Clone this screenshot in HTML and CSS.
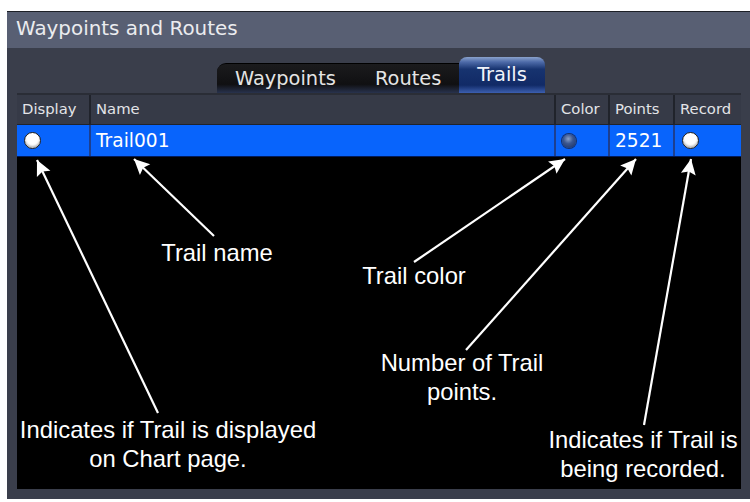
FILE: index.html
```html
<!DOCTYPE html>
<html lang="en">
<head>
    <meta charset="UTF-8">
    <title>Waypoints and Routes - Trails</title>
    <link rel="stylesheet" href="styles.css">
</head>
<body>
    <div class="frame">
        <div class="titlebar">Waypoints and Routes</div>

        <div class="panel">
            <div class="tabs">
                <div class="tab-group">
                    <span class="tab">Waypoints</span>
                    <span class="tab">Routes</span>
                </div>
                <span class="tab active">Trails</span>
            </div>

            <div class="table">
                <div class="row head">
                    <div class="cell">Display</div>
                    <div class="cell">Name</div>
                    <div class="cell">Color</div>
                    <div class="cell">Points</div>
                    <div class="cell">Record</div>
                </div>
                <div class="row selected">
                    <div class="cell"><span class="radio"></span></div>
                    <div class="cell">Trail001</div>
                    <div class="cell"><span class="swatch"></span></div>
                    <div class="cell">2521</div>
                    <div class="cell"><span class="radio"></span></div>
                </div>
                <div class="empty"></div>
            </div>
        </div>
    </div>

    <!-- callouts -->
    <svg class="arrows" width="750" height="502" viewBox="0 0 750 502">
        <defs>
            <marker id="head" markerWidth="8" markerHeight="8" refX="0" refY="4" orient="auto" markerUnits="strokeWidth">
                <path d="M0 4 L7 0.6 L5.8 4 L7 7.4 Z" fill="#fff"/>
            </marker>
        </defs>
        <g stroke="#fff" stroke-width="2.2" marker-start="url(#head)">
            <line x1="37" y1="160" x2="158" y2="413"/>
            <line x1="134" y1="159" x2="214" y2="236"/>
            <line x1="565" y1="159" x2="414" y2="262"/>
            <line x1="636" y1="159" x2="466" y2="350"/>
            <line x1="691" y1="159" x2="644" y2="425"/>
        </g>
    </svg>

    <div class="note note-name">Trail name</div>
    <div class="note note-color">Trail color</div>
    <div class="note note-points">Number of Trail<br>points.</div>
    <div class="note note-display">Indicates if Trail is displayed<br>on Chart page.</div>
    <div class="note note-record">Indicates if Trail is<br>being recorded.</div>
</body>
</html>
```

FILE: styles.css
```css
:root {
    --frame: #3a3e4b;
    --title: #585f73;
    --header: #363a47;
    --line: #20232b;
    --select: #0864fc;
    --select-line: #1d3f8f;
    --ui-font: 'DejaVu Sans', 'Verdana', sans-serif;
    --note-font: 'Liberation Sans', 'Arial', sans-serif;
}

body {
    margin: 0;
    background: #fff;
    width: 750px;
    height: 502px;
    position: relative;
    overflow: hidden;
    font-family: var(--ui-font);
}

.frame {
    margin: 11px 0 0 7px;
    width: 743px;
    height: 488px;
    background: var(--frame);
    border-top: 1px solid #1c1f26;
    box-sizing: border-box;
    display: flex;
    flex-direction: column;
}

.titlebar {
    height: 36px;
    background: var(--title);
    color: #ebecef;
    font-size: 19.9px;
    line-height: 34px;
    padding-left: 9px;
    flex-shrink: 0;
}

.panel {
    flex: 1;
    display: flex;
    flex-direction: column;
    padding: 9px 9px 10px 10px;
}

.tabs {
    display: flex;
    align-items: flex-end;
    padding-left: 200px;
    height: 36px;
}

.tab-group {
    display: flex;
    width: 242px;
    height: 30px;
    border-radius: 9px 0 0 0;
    background: linear-gradient(#1b1b1d 0%, #101012 70%, #28324d 100%);
    border-top: 1px solid #000;
    box-sizing: border-box;
}

.tab {
    color: #e4e4e4;
    font-size: 19.4px;
    line-height: 30px;
}

.tab-group .tab:first-child {
    padding-left: 18px;
    width: 140px;
}

.tab.active {
    width: 86px;
    height: 36px;
    text-align: center;
    color: #f2f4fa;
    border-radius: 8px 8px 0 0;
    background: linear-gradient(#8aa2cc 0%, #4d6aa8 14%, #17336f 34%, #112a66 78%, #3c5fb0 100%);
    line-height: 36px;
}

.table {
    flex: 1;
    display: flex;
    flex-direction: column;
    border-top: 2px solid #2a2d36;
}

.row {
    display: grid;
    grid-template-columns: 74px 465px 54px 65px 1fr;
}

.row.head {
    height: 29px;
    background: var(--header);
    color: #e3e4e8;
    font-size: 14.8px;
}

.row.head .cell {
    border-right: 2px solid var(--line);
    line-height: 28px;
    padding-left: 5px;
}

.row.selected {
    height: 31px;
    background: var(--select);
    color: #fff;
    font-size: 18.6px;
    border-top: 1px solid var(--line);
    border-bottom: 1px solid #001a5a;
}

.row.selected .cell {
    border-right: 2px solid var(--select-line);
    line-height: 30px;
    padding-left: 5px;
    display: flex;
    align-items: center;
}

.row .cell:last-child {
    border-right: none;
}

.radio {
    width: 15px;
    height: 15px;
    border-radius: 50%;
    background: #fff;
    border: 1.5px solid #1a1a1a;
    box-shadow: inset 0 -2px 2px #bbb;
    margin-left: 2px;
}

.swatch {
    width: 14px;
    height: 14px;
    border-radius: 50%;
    margin-left: 1px;
    background: radial-gradient(circle at 45% 35%, #8aa0c8 0%, #3a5690 40%, #1b2d5c 100%);
    box-shadow: 0 0 0 1px #16306a;
}

.empty {
    flex: 1;
    background: #000;
}

.arrows {
    position: absolute;
    left: 0;
    top: 0;
    pointer-events: none;
}

.note {
    position: absolute;
    color: #fff;
    font-family: var(--note-font);
    font-size: 23.8px;
    line-height: 29px;
    text-align: center;
    white-space: nowrap;
    transform: translateX(-50%);
}

.note-name { left: 217px; top: 238px; }
.note-color { left: 414px; top: 261px; }
.note-points { left: 462px; top: 348px; }
.note-display { left: 168px; top: 415px; }
.note-record { left: 643px; top: 425px; }
```
